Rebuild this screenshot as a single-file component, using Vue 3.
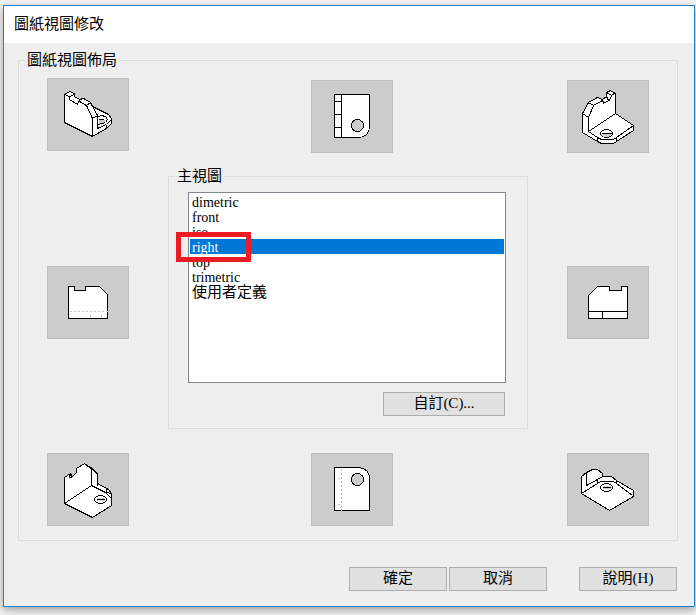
<script setup>
import { ref } from 'vue'

const selected = ref('right')
const views = ['dimetric', 'front', 'iso', 'right', 'top', 'trimetric', '使用者定義']

// Each part: d = path data, f = fill (default none), dash = hidden edge, flat = fill without outline
const thumbs = [
  {
    area: 'nw', label: '左上視圖', parts: [
      { d: 'M17 16L22 13L27 15V18L32 21L36 20L43 24L45 28L61 36L64 40V45L59 50L45 58L17 44Z', f: '#fff' },
      { d: 'M17 16L22 18L27 16M22 18V21L30 26L32 21M32 23L39 27L43 24M39 27L45 40V58M43 24L50 37L45 40M50 37V50L59 46L64 41M59 46V50' },
      { d: 'M51 42L54 40L57 42L57 44L51 46Z', f: '#ccc', flat: true },
      { d: 'M51 38L54 37L58 38L60 41L58 44L51 46M51 41H56' }
    ]
  },
  {
    area: 'n', label: '上視圖', parts: [
      { d: 'M23 14H58V45C58 52 54 57 46 57H23Z', f: '#fff' },
      { d: 'M30 14V57M23 21H30M23 34H30M23 47H30' },
      { d: 'M40 45a6 6 0 1 0 12 0a6 6 0 1 0 -12 0', f: '#ccc' }
    ]
  },
  {
    area: 'ne', label: '右上視圖', parts: [
      { d: 'M15 33L21 22L30 17L35 19L39 16V12L43 10L48 13V33L66 45V50L49 61L46 63H34L30 61L15 52Z', f: '#fff' },
      { d: 'M39 12L44 15L48 12M44 15L43 19L36 23L35 19M39 16L41 20M21 22L26 25L35 20M26 25L21 37L15 33M21 37V51L48 33M21 51L30 57L34 59H46L49 57L66 45M30 57V61M49 57V61' },
      { d: 'M33 53a6 4 0 1 0 12 0a6 4 0 1 0 -12 0', f: '#fff' },
      { d: 'M34 53H44L42 56H36Z', f: '#ccc', flat: true },
      { d: 'M34 53H44' }
    ]
  },
  {
    area: 'w', label: '左視圖', parts: [
      { d: 'M21 20H27V24H38V20H52L60 28V52H21Z', f: '#fff' },
      { d: 'M22 45H60M43 48V50M54 48V50', dash: true }
    ]
  },
  {
    area: 'e', label: '右視圖', parts: [
      { d: 'M30 20H42V24H54V20H60V52H21V29Z', f: '#fff' },
      { d: 'M21 45H60M35 45V52' }
    ]
  },
  {
    area: 'sw', label: '左下視圖', parts: [
      { d: 'M17 24L23 20L24 24L29 19V15L37 10L50 20V30L61 36L64 40V52L45 64L17 50Z', f: '#fff' },
      { d: 'M22 21V24H24V20M39 12L45 15L50 21M44 16V32M17 50L44 32L58 39L64 45M50 30V32M59 35V39L64 40' },
      { d: 'M47 46a6 4 0 1 0 12 0a6 4 0 1 0 -12 0', f: '#fff' },
      { d: 'M49 44H57V47H49Z', f: '#ccc', flat: true },
      { d: 'M49 46H57' }
    ]
  },
  {
    area: 's', label: '下視圖', parts: [
      { d: 'M23 14H48C54 15 58 19 58 25V57H23Z', f: '#fff' },
      { d: 'M30 15V57M26 25H28M26 51H28', dash: true },
      { d: 'M40 26a6 6 0 1 0 12 0a6 6 0 1 0 -12 0', f: '#ccc' }
    ]
  },
  {
    area: 'se', label: '右下視圖', parts: [
      { d: 'M14 23L19 19L25 16H30L35 20V23H44L49 27L66 37V43L42 57L14 40Z', f: '#fff' },
      { d: 'M19 19V32L30 26L35 23M14 40L30 30L33 28H46L49 30L65 42M30 26V30M49 27V30' },
      { d: 'M33 34a6 4 0 1 0 12 0a6 4 0 1 0 -12 0', f: '#fff' },
      { d: 'M35 32H43V35H35Z', f: '#ccc', flat: true },
      { d: 'M35 34H43' }
    ]
  }
]
</script>

<template>
  <main class="dialog">
    <header class="titlebar"><h1>圖紙視圖修改</h1></header>
    <form class="body" @submit.prevent>
      <fieldset class="group layout">
        <legend>圖紙視圖佈局</legend>
        <button v-for="t in thumbs" :key="t.area" type="button" class="thumb" :class="t.area" :aria-label="t.label">
          <svg viewBox="1 1 80 71" width="80" height="71" aria-hidden="true">
            <g transform="translate(.5 .5)">
              <path v-for="(p, i) in t.parts" :key="i" :d="p.d" :fill="p.f || 'none'" :class="{ hidden: p.dash, flat: p.flat }" />
            </g>
          </svg>
        </button>
        <fieldset class="group main-view">
          <legend>主視圖</legend>
          <div class="list-wrap">
            <select v-model="selected" class="list" size="7" aria-label="主視圖">
              <option v-for="v in views" :key="v" :value="v" :class="{ cjk: v === '使用者定義' }">{{ v }}</option>
            </select>
            <span class="marker"></span>
          </div>
          <button type="button" class="btn custom">自訂(C)...</button>
        </fieldset>
      </fieldset>
      <footer class="actions">
        <button type="submit" class="btn">確定</button>
        <button type="button" class="btn">取消</button>
        <button type="button" class="btn help">說明(H)</button>
      </footer>
    </form>
  </main>
</template>

<style>
body {
  margin: 0;
  background: #f3f3f3;
}
</style>

<style scoped>
* {
  box-sizing: border-box;
}
.dialog {
  margin: 5px 1px 8px 3px;
  border: 1px solid #1a80d0;
  background: #efefef;
  box-shadow: 0 3px 8px rgba(0, 0, 0, 0.35);
  font-family: "Liberation Serif", "Noto Sans CJK TC", serif;
  font-size: 15px;
  font-weight: 400;
  color: #000;
}
.titlebar {
  display: flex;
  align-items: center;
  height: 37px;
  padding: 0 10px 2px;
  background: #fff;
}
h1 {
  margin: 0;
  font-size: 15px;
  line-height: 20px;
  font-weight: 400;
}
.body {
  padding: 17px 16px 15px 14px;
}
.group {
  min-width: 0;
  margin: 0;
  border: 1px solid #dcdcdc;
}
legend {
  height: 1px;
  padding: 0 2px;
  line-height: 1px;
  white-space: nowrap;
}
.layout {
  display: grid;
  grid-template-columns: 82px 1fr 82px;
  grid-template-rows: 74px auto 73px;
  grid-template-areas: "nw n ne" "w main e" "sw s se";
  row-gap: 24px;
  padding: 17px 28px 14px;
}
.layout > legend {
  margin-left: -22px;
}
.thumb {
  width: 82px;
  height: 73px;
  padding: 0;
  border: 1px solid #bfbfbf;
  background: #ccc;
  place-self: start center;
}
.thumb svg {
  display: block;
}
.thumb path {
  stroke: #000;
  stroke-width: 1;
  shape-rendering: crispEdges;
}
.thumb path.hidden {
  stroke: #c6c6c6;
  stroke-dasharray: 2 2;
}
.thumb path.flat {
  stroke: none;
}
.nw { grid-area: nw; }
.n { grid-area: n; margin: 2px 0 0 8px; }
.ne { grid-area: ne; margin-top: 2px; }
.w { grid-area: w; align-self: center; }
.e { grid-area: e; align-self: center; }
.sw { grid-area: sw; }
.s { grid-area: s; margin-left: 8px; }
.se { grid-area: se; }
.main-view {
  grid-area: main;
  display: flex;
  flex-direction: column;
  gap: 9px;
  margin: 0 39px;
  padding: 15px 21px 12px 19px;
}
.main-view > legend {
  margin-left: -13px;
}
.list-wrap {
  position: relative;
}
.list {
  display: block;
  width: 100%;
  height: 191px;
  padding: 1px;
  border: 1px solid #828790;
  border-radius: 0;
  outline: none;
  background: #fff;
  color: #000;
  font-family: inherit;
  font-size: 14px;
  font-weight: 400;
  overflow: hidden;
}
.list option {
  display: flex;
  align-items: center;
  height: 15px;
  min-height: 15px;
  padding: 2px 2px 0;
}
.list option.cjk {
  padding: 0 2px 3px;
  font-size: 15px;
}
.list option:checked {
  background: #0078d7 linear-gradient(#0078d7, #0078d7);
  color: #fff;
}
.marker {
  position: absolute;
  left: -12px;
  top: 40px;
  width: 75px;
  height: 30px;
  border: 5px solid #ed1c24;
  pointer-events: none;
}
.btn {
  width: 98px;
  height: 24px;
  padding: 0 0 2px;
  border: 1px solid #adadad;
  background: #e1e1e1;
  color: #000;
  font: inherit;
  line-height: 20px;
}
.custom {
  width: 122px;
  margin-right: 1px;
  align-self: flex-end;
}
.actions {
  display: flex;
  justify-content: flex-end;
  gap: 2px;
  margin-top: 26px;
  padding-right: 1px;
}
.help {
  margin-left: 30px;
}
</style>
